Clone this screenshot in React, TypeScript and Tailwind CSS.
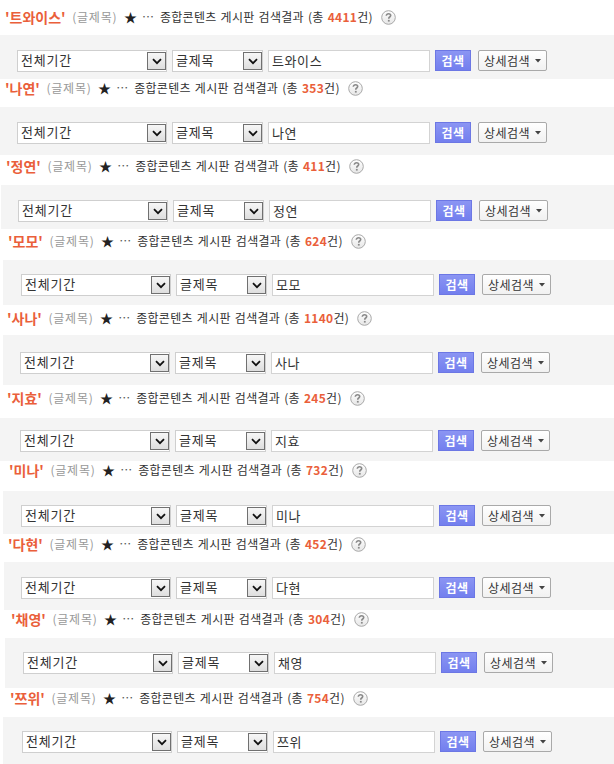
import React from "react";

type Member = {
  name: string;
  count: number;
  head: string;
  band: string;
};

// per-row spacing, the rows are not perfectly even
const members: Member[] = [
  { name: "트와이스", count: 4411, head: "h-[35px] pt-[9px] pl-[5px]", band: "h-[44px] pt-[15px] pl-[17px]" },
  { name: "나연", count: 353, head: "h-[28px] pt-[1px] pl-[5px]", band: "h-[48px] pt-[15px] pl-[17px]" },
  { name: "정연", count: 411, head: "h-[30px] pt-[3px] pl-[6px]", band: "h-[44px] pt-[15px] ml-[1px] pl-[17px]" },
  { name: "모모", count: 624, head: "h-[31px] pt-[4px] pl-[8px]", band: "h-[45px] pt-[14px] ml-[3px] pl-[18px]" },
  { name: "사나", count: 1140, head: "h-[30px] pt-[5px] pl-[7px]", band: "h-[50px] pt-[17px] ml-[3px] pl-[17px]" },
  { name: "지효", count: 245, head: "h-[33px] pt-[5px] pl-[7px]", band: "h-[43px] pt-[12px] pl-[20px]" },
  { name: "미나", count: 732, head: "h-[30px] pt-[1px] pl-[9px]", band: "h-[43px] pt-[14px] ml-[3px] pl-[18px]" },
  { name: "다현", count: 452, head: "h-[28px] pt-[2px] pl-[8px]", band: "h-[48px] pt-[15px] ml-[4px] pl-[17px]" },
  { name: "채영", count: 304, head: "h-[28px] pt-[1px] pl-[11px]", band: "h-[50px] pt-[14px] ml-[5px] pl-[18px]" },
  { name: "쯔위", count: 754, head: "h-[29px] pt-[2px] pl-[10px]", band: "h-[47px] pt-[14px] ml-[3px] pl-[19px]" },
];

const HelpIcon = () => (
  <svg width="15" height="15" viewBox="0 0 15 15" className="ml-[8px] shrink-0">
    <defs>
      <linearGradient id="helpBg" x1="0" y1="0" x2="0" y2="1">
        <stop offset="0" stopColor="#ffffff" />
        <stop offset="1" stopColor="#e6e6e6" />
      </linearGradient>
    </defs>
    <circle cx="7.5" cy="7.5" r="6.8" fill="url(#helpBg)" stroke="#a8a8a8" strokeWidth="1" />
    <path
      d="M5.3 5.8 C5.3 4.4 6.3 3.8 7.5 3.8 C8.8 3.8 9.7 4.5 9.7 5.6 C9.7 6.8 8.2 7 7.8 8 L7.8 8.8"
      fill="none"
      stroke="#8a8a8a"
      strokeWidth="1.6"
    />
    <rect x="6.9" y="9.9" width="1.8" height="1.7" fill="#8a8a8a" />
  </svg>
);

const Chevron = () => (
  <div className="flex h-[18px] w-[19px] shrink-0 items-center justify-center border border-[#707070] bg-gradient-to-b from-[#f7f7f7] to-[#dedede]">
    <svg width="10" height="7" viewBox="0 0 10 7">
      <path d="M1 1.2 L5 5.2 L9 1.2" fill="none" stroke="#111" strokeWidth="1.8" />
    </svg>
  </div>
);

const Select = ({ label, width }: { label: string; width: string }) => (
  <div className={`flex h-[22px] ${width} items-start justify-between border border-[#cfcfcf] bg-white p-[1px] pr-0`}>
    <span className="pl-[2px] text-[13px] leading-[16px] tracking-[0.8px] text-[#333]">{label}</span>
    <Chevron />
  </div>
);

const SearchRow = ({ value }: { value: string }) => (
  <div className="flex items-start">
    <Select label="전체기간" width="w-[150px]" />
    <div className="ml-[5px]">
      <Select label="글제목" width="w-[91px]" />
    </div>
    <div className="ml-[5px] flex h-[22px] w-[162px] items-center border border-[#d3d3d3] bg-white pl-[3px] text-[13px] tracking-[0.6px] text-[#333]">
      {value}
    </div>
    <button className="ml-[5px] flex h-[21px] w-[36px] items-center justify-center border border-[#6c77e4] bg-gradient-to-b from-[#8b95f3] to-[#737fee] text-[12px] font-bold tracking-[0.5px] text-white">
      검색
    </button>
    <button className="ml-[7px] flex h-[21px] w-[69px] items-center justify-center gap-[5px] rounded-[2px] border border-[#a9a9a9] bg-gradient-to-b from-white to-[#f1f1f1] text-[12px] tracking-[0.5px] text-[#333]">
      상세검색
      <svg width="6" height="4" viewBox="0 0 6 4">
        <path d="M0 0 H6 L3 3.5 Z" fill="#444" />
      </svg>
    </button>
  </div>
);

const Header = ({ m }: { m: Member }) => (
  <div className={`bg-white ${m.head}`}>
    <div className="flex items-center whitespace-pre text-[12px] leading-[16px] text-[#333]">
      <span className="text-[14px] font-bold text-[#ea5f3b]">'{m.name}'</span>
      <span className="tracking-[0.8px] text-[#999] [word-spacing:3px]"> (글제목) </span>
      <span className="text-[13px] text-[#222]">★</span>
      <span className="ml-[5px] text-[#555]">…</span>
      <span className="ml-[6px] tracking-[0.3px] [word-spacing:1px]">종합콘텐츠 게시판 검색결과 (총 </span>
      <span className="font-bold tracking-[0.3px] text-[#ea5f3b]">{m.count}</span>
      <span className="tracking-[0.4px]">건)</span>
      <HelpIcon />
    </div>
  </div>
);

export default function App() {
  return (
    <div className="h-[764px] w-[614px] overflow-hidden bg-white font-['Noto_Sans_CJK_KR',sans-serif]">
      {members.map((m) => (
        <section key={m.name}>
          <Header m={m} />
          <div className={`bg-[#f4f4f4] ${m.band}`}>
            <SearchRow value={m.name} />
          </div>
        </section>
      ))}
    </div>
  );
}
